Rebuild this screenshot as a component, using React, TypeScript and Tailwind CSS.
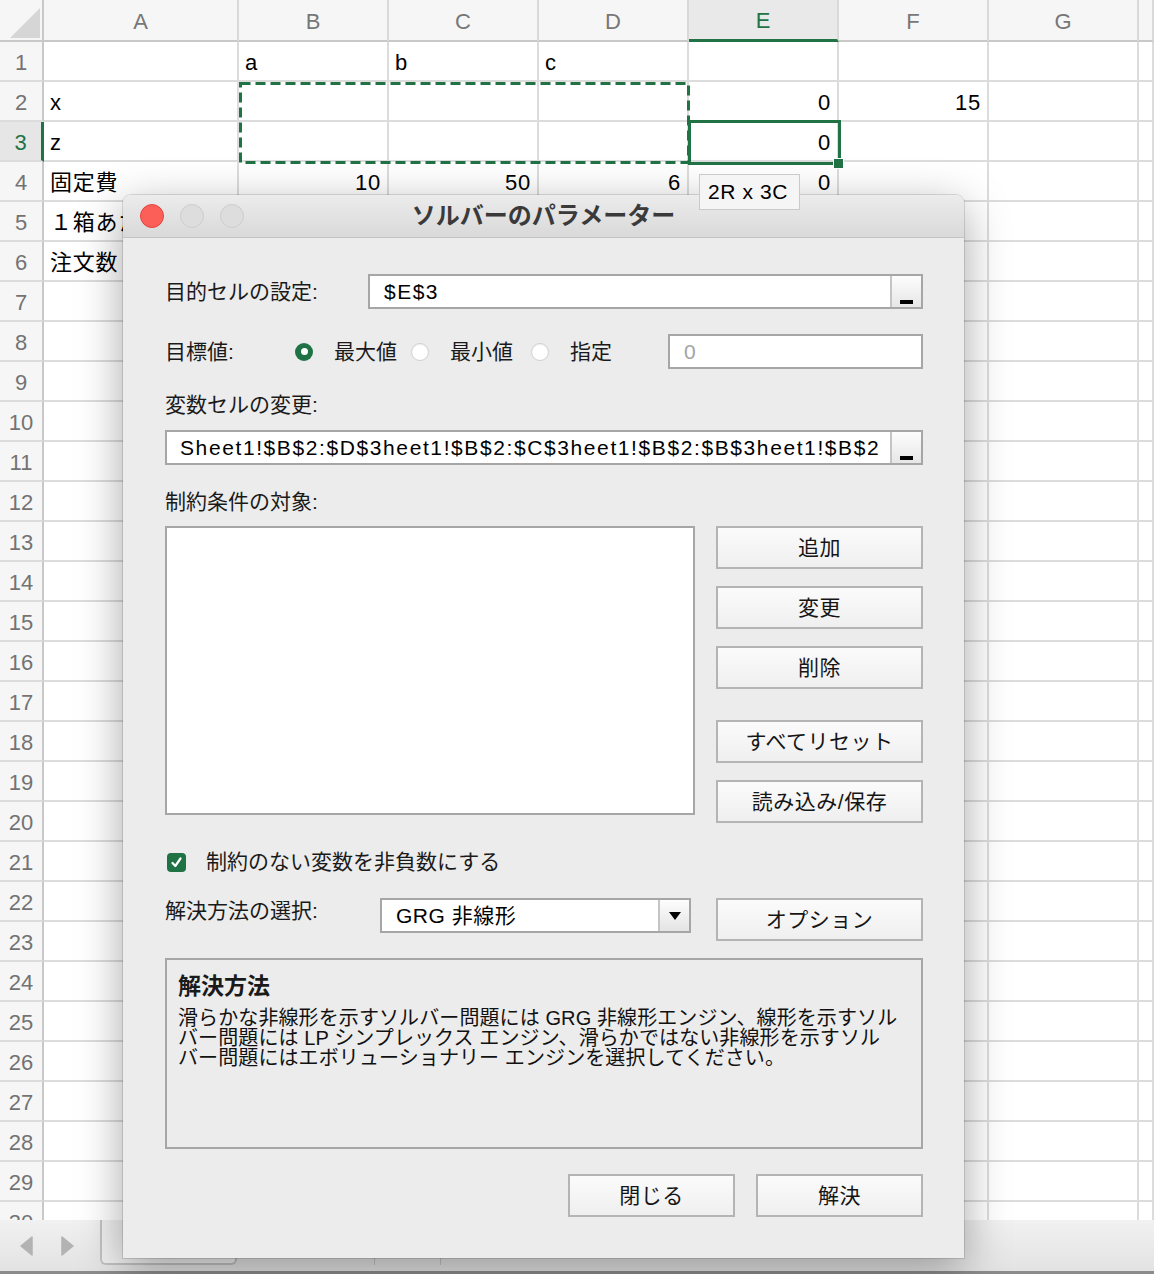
import React from "react";

const FONT = "font-['Liberation_Sans','Noto_Sans_CJK_JP',sans-serif]";

const COLS = ["A", "B", "C", "D", "E", "F", "G", ""];
const WIDTHS = ["w-[195px]", "w-[150px]", "w-[150px]", "w-[150px]", "w-[150px]", "w-[150px]", "w-[150px]", "flex-1"];

type Cell = { t: string; right?: boolean };

const CELLS: Record<string, Cell> = {
  B1: { t: "a" },
  C1: { t: "b" },
  D1: { t: "c" },
  A2: { t: "x" },
  E2: { t: "0", right: true },
  F2: { t: "15", right: true },
  A3: { t: "z" },
  E3: { t: "0", right: true },
  A4: { t: "固定費" },
  B4: { t: "10", right: true },
  C4: { t: "50", right: true },
  D4: { t: "6", right: true },
  E4: { t: "0", right: true },
  A5: { t: "１箱あたり利益" },
  A6: { t: "注文数" },
};

function Sheet() {
  const rows = Array.from({ length: 30 }, (_, i) => i + 1);
  return (
    <div className="h-[1220px] overflow-hidden bg-white">
      {/* column headers */}
      <div className="flex h-[42px]">
        <div className="w-[44px] shrink-0 bg-[#f6f6f6] border-r-2 border-b-2 border-[#c8c8c8] relative">
          <svg className="absolute left-0 top-0" width="42" height="40">
            <polygon points="10,38 40,38 40,8" fill="#d6d6d6" />
          </svg>
        </div>
        {COLS.map((c, i) => (
          <div
            key={i}
            className={`${WIDTHS[i]} shrink-0 flex items-center justify-center pt-[2px] text-[22px] border-r-2 ${
              c === "E"
                ? "bg-[#e9e9e9] text-[#217346] border-b-[3px] border-b-[#217346] border-r-[#d9d9d9]"
                : "bg-[#f6f6f6] text-[#777777] border-b-2 border-b-[#c8c8c8] border-r-[#d9d9d9]"
            }`}
          >
            {c}
          </div>
        ))}
      </div>
      {rows.map((r) => (
        <div key={r} className="flex h-[40px]">
          <div
            className={`w-[44px] shrink-0 flex items-center justify-center pt-[2px] text-[22px] border-b-2 border-b-[#dcdcdc] ${
              r === 3
                ? "bg-[#e6e6e6] text-[#217346] border-r-[3px] border-r-[#217346]"
                : "bg-[#f6f6f6] text-[#737373] border-r-2 border-r-[#c8c8c8]"
            }`}
          >
            {r}
          </div>
          {COLS.map((c, i) => {
            const cell = CELLS[`${c}${r}`];
            return (
              <div
                key={i}
                className={`${WIDTHS[i]} shrink-0 flex items-center px-[6px] pt-[2px] text-[22px] tracking-[0.8px] text-black whitespace-nowrap overflow-hidden border-r-2 border-b-2 border-[#dcdcdc] ${
                  cell?.right ? "justify-end" : "justify-start"
                }`}
              >
                {cell?.t}
              </div>
            );
          })}
        </div>
      ))}
    </div>
  );
}

function TabBar() {
  return (
    <>
      <div className="h-[51px] bg-gradient-to-b from-[#f1f1f1] to-[#e3e3e3] flex items-start">
        <div className="w-[100px] h-full flex items-center gap-[28px] pl-[20px]">
          <svg width="13" height="20" viewBox="0 0 13 20">
            <path d="M12 1 L1 10 L12 19 Z" fill="#b3b3b3" stroke="#b3b3b3" strokeLinejoin="round" strokeWidth="1.5" />
          </svg>
          <svg width="13" height="20" viewBox="0 0 13 20">
            <path d="M1 1 L12 10 L1 19 Z" fill="#b3b3b3" stroke="#b3b3b3" strokeLinejoin="round" strokeWidth="1.5" />
          </svg>
        </div>
        <div className="w-[137px] h-[45px] bg-[#f0f0f0] border-2 border-t-0 border-[#c2c2c2] rounded-b-[6px]" />
        <div className="w-[138px] h-[45px] border-r border-[#c4c4c4]" />
        <div className="w-[66px] h-[45px] border-r border-[#c4c4c4]" />
      </div>
      <div className="h-[3px] bg-[#8c8c8c]" />
    </>
  );
}

function RefButton() {
  return (
    <div className="w-[31px] h-full border-l-2 border-[#c4c4c4] bg-gradient-to-b from-[#fdfdfd] to-[#e6e6e6] flex items-end justify-center pb-[3px]">
      <div className="w-[13px] h-[4px] bg-black" />
    </div>
  );
}

function Btn({ children, className = "" }: { children: React.ReactNode; className?: string }) {
  return (
    <div
      className={`h-[43px] border-2 border-[#b4b4b4] bg-gradient-to-b from-[#fbfbfb] to-[#efefef] flex items-center justify-center text-[21px] text-[#151515] tracking-[0.5px] ${className}`}
    >
      {children}
    </div>
  );
}

function Radio({ on }: { on?: boolean }) {
  return on ? (
    <div className="w-[18px] h-[18px] rounded-full bg-[#1f7244] flex items-center justify-center">
      <div className="w-[7px] h-[7px] rounded-full bg-white" />
    </div>
  ) : (
    <div className="w-[18px] h-[18px] rounded-full bg-white border border-[#d0d0d0] shadow-[inset_0_1px_1px_rgba(0,0,0,0.06)]" />
  );
}

function Dialog() {
  return (
    <div className="absolute left-[123px] top-[195px] w-[841px] h-[1063px] bg-[#ececec] rounded-t-[8px] shadow-[0_12px_45px_rgba(0,0,0,0.35),0_0_0_1px_rgba(0,0,0,0.12)] flex flex-col text-[#1a1a1a]">
      {/* title bar */}
      <div className="h-[43px] shrink-0 rounded-t-[8px] bg-gradient-to-b from-[#ececec] to-[#d9d9d9] border-b border-[#c3c3c3] relative flex items-center justify-center">
        <div className="absolute left-[17px] top-[9px] flex gap-[16px]">
          <div className="w-[24px] h-[24px] rounded-full bg-[#fc5f57] border border-[#e1453f]" />
          <div className="w-[24px] h-[24px] rounded-full bg-[#dddddd] border border-[#cdcdcd]" />
          <div className="w-[24px] h-[24px] rounded-full bg-[#dddddd] border border-[#cdcdcd]" />
        </div>
        <div className="text-[24px] font-bold text-[#3a3a3a]">ソルバーのパラメーター</div>
      </div>

      <div className="flex flex-col pl-[42px] pr-[41px] text-[21px]">
        {/* objective */}
        <div className="mt-[36px] h-[35px] flex items-center">
          <div className="w-[203px] shrink-0">目的セルの設定:</div>
          <div className="flex-1 h-full border-2 border-[#a6a6a6] bg-white flex items-stretch">
            <div className="flex-1 flex items-center pl-[14px] text-[21px] tracking-[1.5px] text-black">$E$3</div>
            <RefButton />
          </div>
        </div>

        {/* target */}
        <div className="mt-[25px] h-[35px] flex items-center">
          <div className="w-[130px] shrink-0">目標値:</div>
          <div className="w-[116px] flex items-center gap-[21px]">
            <Radio on />
            <span>最大値</span>
          </div>
          <div className="w-[120px] flex items-center gap-[21px]">
            <Radio />
            <span>最小値</span>
          </div>
          <div className="flex items-center gap-[21px]">
            <Radio />
            <span>指定</span>
          </div>
          <div className="ml-auto w-[255px] h-full border-2 border-[#a6a6a6] bg-white flex items-center pl-[14px] text-[#a3a3a3]">
            0
          </div>
        </div>

        {/* variable cells */}
        <div className="mt-[24px] h-[24px] leading-[24px]">変数セルの変更:</div>
        <div className="mt-[13px] h-[35px] border-2 border-[#a6a6a6] bg-white flex items-stretch">
          <div className="flex-1 flex items-center pl-[13px] tracking-[1.6px] text-black whitespace-nowrap overflow-hidden">
            Sheet1!$B$2:$D$3heet1!$B$2:$C$3heet1!$B$2:$B$3heet1!$B$2
          </div>
          <RefButton />
        </div>

        {/* constraints */}
        <div className="mt-[25px] h-[24px] leading-[24px]">制約条件の対象:</div>
        <div className="mt-[12px] flex items-start justify-between">
          <div className="w-[530px] h-[289px] border-2 border-[#a6a6a6] bg-white" />
          <div className="w-[207px] flex flex-col">
            <Btn>追加</Btn>
            <Btn className="mt-[17px]">変更</Btn>
            <Btn className="mt-[17px]">削除</Btn>
            <Btn className="mt-[31px]">すべてリセット</Btn>
            <Btn className="mt-[17px]">読み込み/保存</Btn>
          </div>
        </div>

        {/* non-negative */}
        <div className="mt-[27px] h-[24px] flex items-center">
          <div className="ml-[2px] w-[19px] h-[19px] rounded-[4px] bg-[#1f7244] flex items-center justify-center">
            <svg width="13" height="13" viewBox="0 0 13 13">
              <path d="M2.5 7 L5.3 10 L10.5 2.5" stroke="white" strokeWidth="2.2" fill="none" strokeLinecap="round" strokeLinejoin="round" />
            </svg>
          </div>
          <span className="ml-[20px]">制約のない変数を非負数にする</span>
        </div>

        {/* solving method */}
        <div className="mt-[24px] h-[43px] flex items-start">
          <div className="w-[215px] h-[26px] leading-[26px] shrink-0">解決方法の選択:</div>
          <div className="w-[311px] h-[35px] border-2 border-[#a6a6a6] bg-white flex items-stretch">
            <div className="flex-1 flex items-center pl-[14px] tracking-[0.5px] text-black">GRG 非線形</div>
            <div className="w-[31px] border-l-2 border-[#c4c4c4] bg-gradient-to-b from-[#fdfdfd] to-[#e4e4e4] flex items-center justify-center">
              <svg width="14" height="10" viewBox="0 0 14 10">
                <path d="M1 1 L13 1 L7 9 Z" fill="black" />
              </svg>
            </div>
          </div>
          <Btn className="ml-auto w-[207px]">オプション</Btn>
        </div>

        {/* description */}
        <div className="mt-[17px] h-[191px] border-2 border-[#a6a6a6] pl-[11px] pt-[12px]">
          <div className="text-[23px] font-bold leading-[28px] text-[#1a1a1a]">解決方法</div>
          <div className="mt-[8px] text-[20px] leading-[20px] tracking-[0.1px] whitespace-nowrap text-[#111]">
            <div>滑らかな非線形を示すソルバー問題には GRG 非線形エンジン、線形を示すソル</div>
            <div>バー問題には LP シンプレックス エンジン、滑らかではない非線形を示すソル</div>
            <div>バー問題にはエボリューショナリー エンジンを選択してください。</div>
          </div>
        </div>

        {/* footer buttons */}
        <div className="mt-[25px] flex justify-end gap-[21px]">
          <Btn className="w-[167px]">閉じる</Btn>
          <Btn className="w-[167px]">解決</Btn>
        </div>
      </div>
    </div>
  );
}

export default function App() {
  return (
    <div className={`relative w-[1154px] h-[1274px] overflow-hidden bg-white ${FONT}`}>
      <Sheet />
      <TabBar />

      {/* active cell E3 */}
      <div className="absolute left-[688px] top-[120px] w-[153px] h-[45px] border-[3px] border-[#217346]" />
      <div className="absolute left-[833px] top-[158px] w-[11px] h-[11px] bg-[#217346] border border-white" />

      {/* copy marquee B2:D3 */}
      <svg className="absolute left-[238px] top-[81px]" width="453" height="84">
        <rect x="2.5" y="2.5" width="448" height="79" fill="none" stroke="#217346" strokeWidth="3" strokeDasharray="10 5" />
      </svg>

      <Dialog />

      {/* selection size tooltip */}
      <div className="absolute left-[699px] top-[174px] w-[101px] h-[36px] bg-[#f5f5f5] border border-[#cacaca] flex items-center pl-[8px] text-[21px] tracking-[0.6px] text-black">
        2R x 3C
      </div>
    </div>
  );
}
